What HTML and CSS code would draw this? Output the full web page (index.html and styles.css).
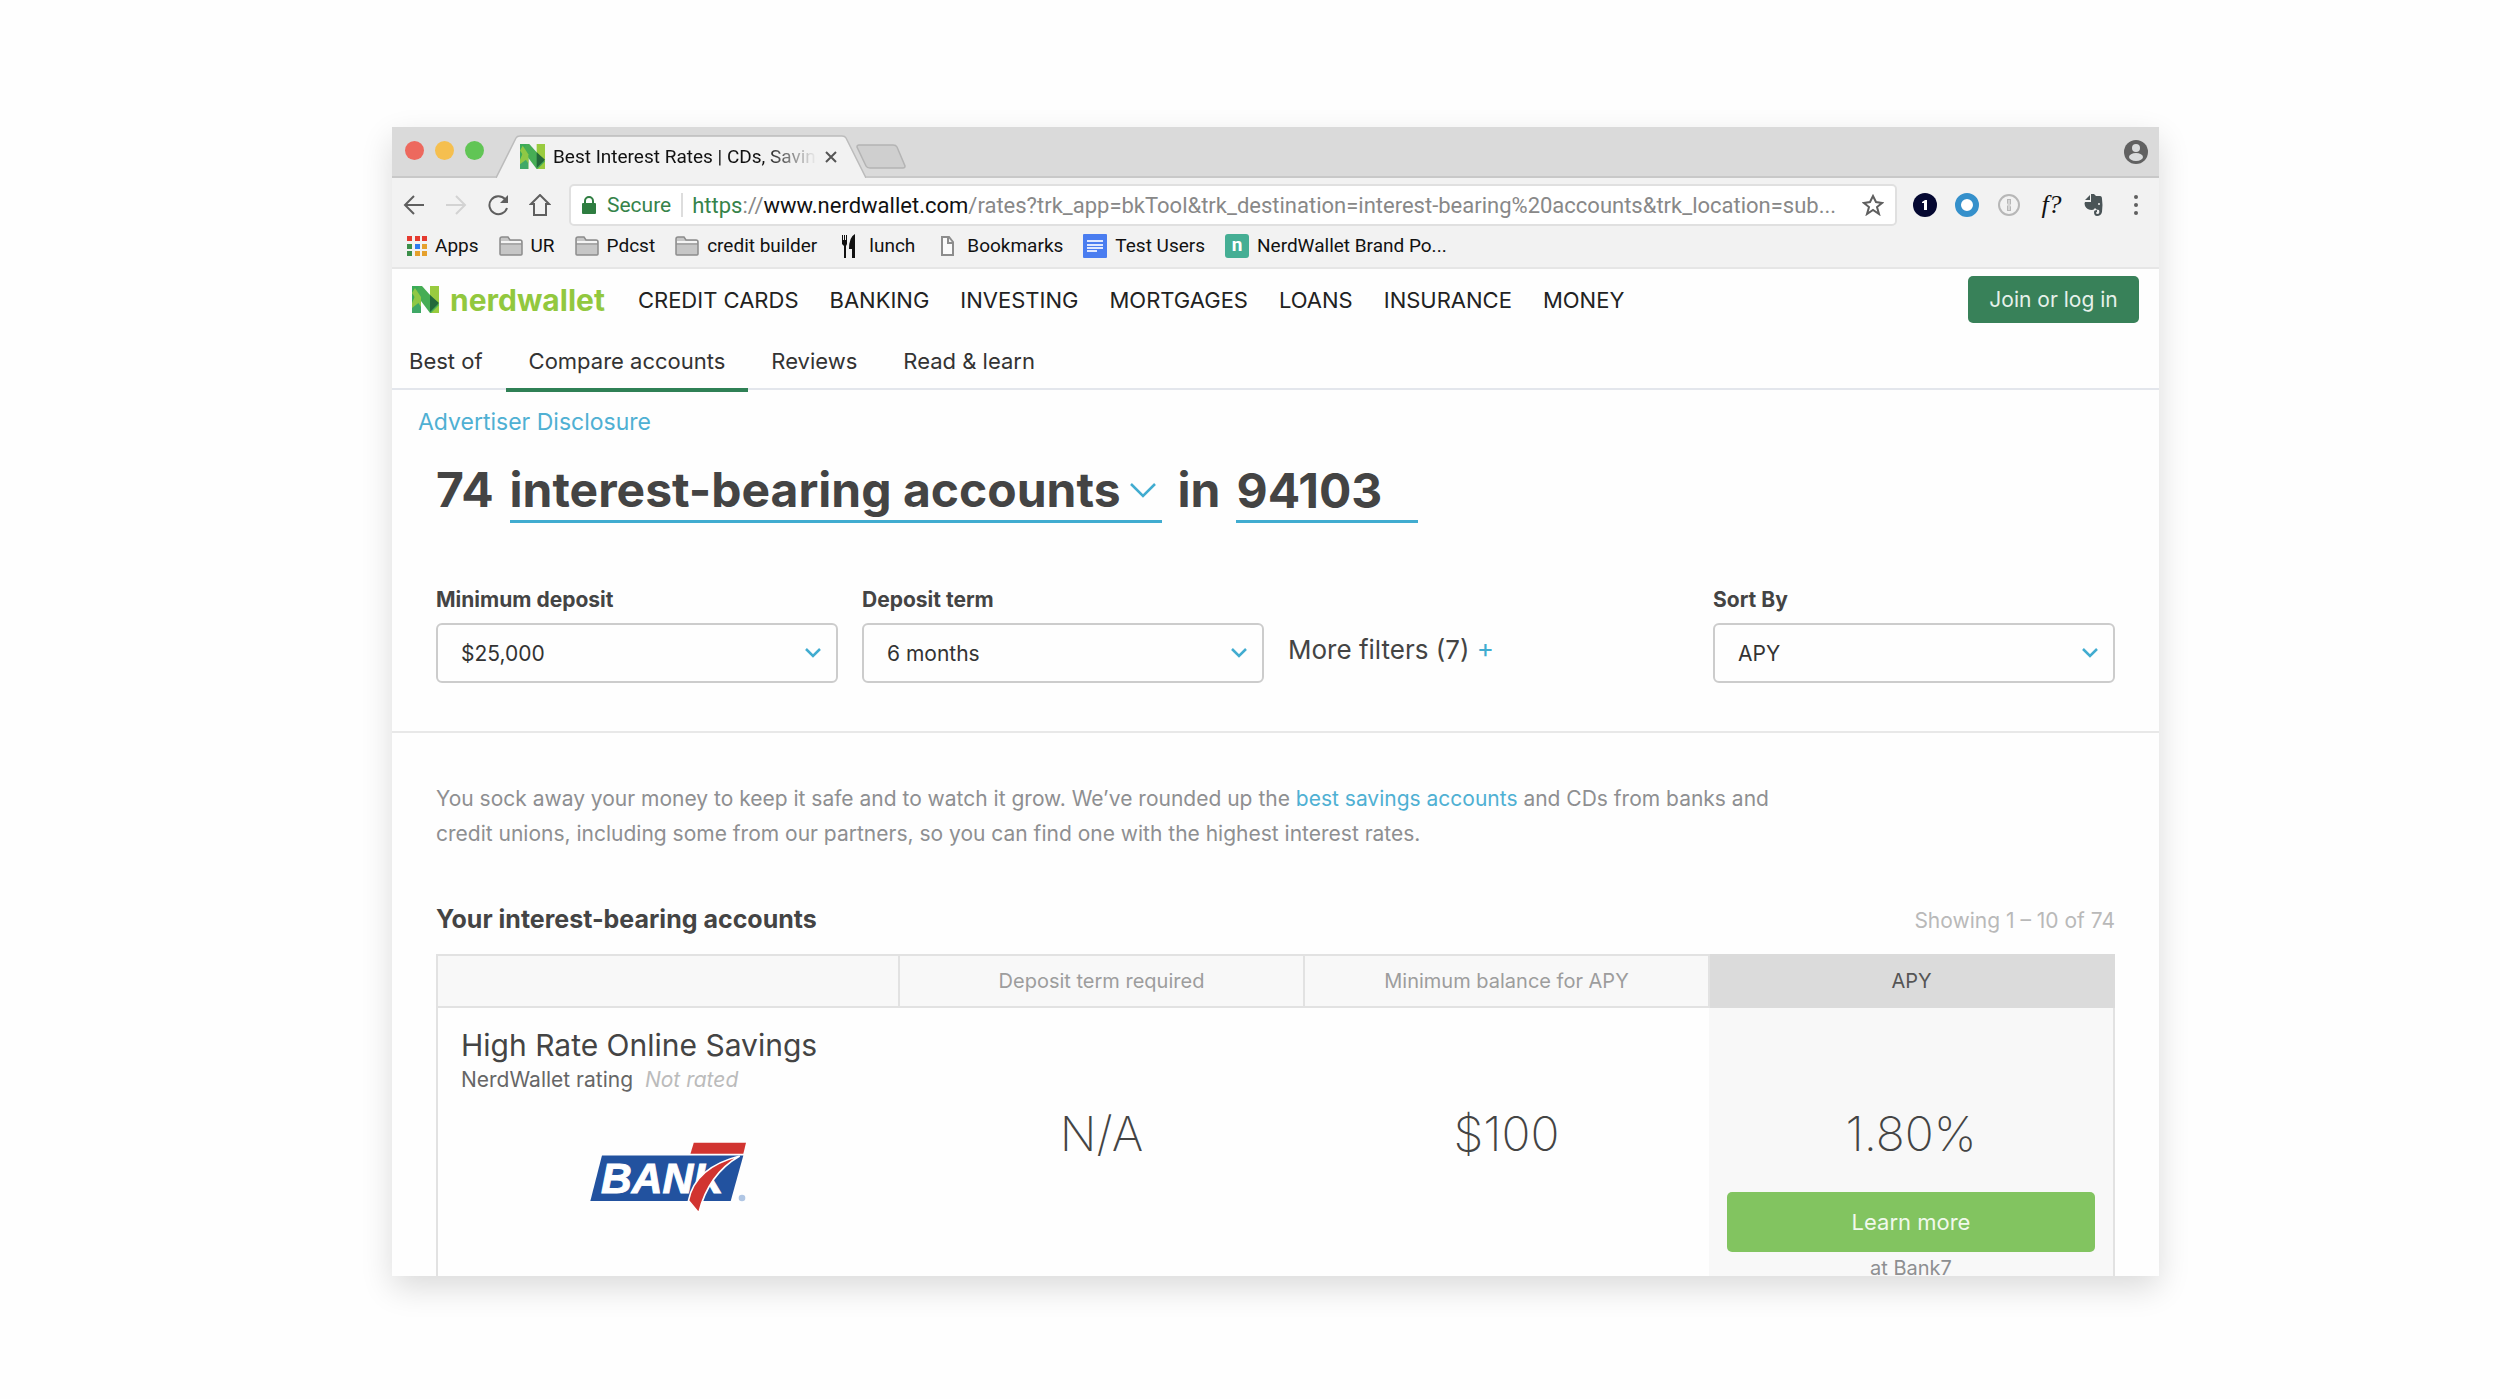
FILE: index.html
```html
<!DOCTYPE html>
<html lang="en">
<head>
    <meta charset="UTF-8">
    <meta name="viewport" content="width=device-width, initial-scale=1.0">
    <title>Best Interest Rates | CDs, Savings</title>
    <link rel="stylesheet" href="styles.css">
</head>
<body>
    <!-- shared icons -->
    <svg class="sprite" aria-hidden="true">
        <symbol id="nw-mark" viewBox="0 0 27 27">
            <path d="M0 0h9v27H0z" fill="#8fc845"/>
            <path d="M0 0h9L3 10 0 17z" fill="#3bab59"/>
            <path d="M0 27v-5l9-7v12z" fill="#3fa866"/>
            <path d="M18 0h9v27h-9z" fill="#99cb3f"/>
            <path d="M7 0h3l17 19-8 8h-1L3 7z" fill="#46ad55"/>
            <path d="M0 7l3-5 6 9v10z" fill="#8fc845"/>
            <path d="M18 9l9 8-9 9z" fill="#23683a"/>
        </symbol>
        <symbol id="folder" viewBox="0 0 24 20">
            <path d="M1 18V3q0-2 2-2h6l2 3h10q2 0 2 2v12q0 1-1 1H2q-1 0-1-1z" fill="#c6c6c6" stroke="#8c8c8c" stroke-width="1.5"/>
            <path d="M2 5h20v2H2z" fill="#f4f4f4"/>
            <path d="M1 8h22" stroke="#8c8c8c"/>
        </symbol>
        <symbol id="chevron" viewBox="0 0 16 10">
            <path d="M1 1l7 7 7-7" fill="none" stroke="#41acd0" stroke-width="2.5"/>
        </symbol>
    </svg>

    <div class="window">
        <div class="tab-strip">
            <div class="lights">
                <span class="light red"></span>
                <span class="light yellow"></span>
                <span class="light green"></span>
            </div>
            <div class="tab">
                <svg class="tab-shape" viewBox="0 0 370 43" preserveAspectRatio="none"><path d="M0 43L20 3q1-2 4-2h322q3 0 4 2l20 40" fill="#f2f2f2" stroke="#bcbcbc" stroke-width="1.5"/></svg>
                <svg class="favicon"><use href="#nw-mark"/></svg>
                <span class="tab-title">Best Interest Rates | CDs, Savings</span>
                <button class="icon-btn" aria-label="Close tab"><svg width="12" height="12" viewBox="0 0 12 12"><path d="M1 1l10 10M11 1L1 11" stroke="#555" stroke-width="2"/></svg></button>
            </div>
            <button class="icon-btn new-tab" aria-label="New tab"><svg width="50" height="26" viewBox="0 0 50 26"><path d="M3 1h34q3 0 4 2l8 19q0 2-2 2H14q-3 0-4-2L1 3q0-2 2-2z" fill="#cfcfcf" stroke="#b4b4b4" stroke-width="1.5"/></svg></button>
            <button class="icon-btn avatar" aria-label="Profile"><svg width="24" height="24" viewBox="0 0 24 24"><circle cx="12" cy="12" r="12" fill="#616161"/><circle cx="12" cy="8" r="4" fill="#dadcdd"/><ellipse cx="12" cy="17" rx="7" ry="4" fill="#dadcdd"/></svg></button>
        </div>

        <div class="toolbar">
            <div class="nav-buttons">
                <button class="icon-btn" aria-label="Back"><svg width="22" height="22" viewBox="0 0 22 22" fill="none" stroke="#5f5f5f" stroke-width="2"><path d="M21 11H2M11 2l-9 9 9 9"/></svg></button>
                <button class="icon-btn" aria-label="Forward"><svg width="22" height="22" viewBox="0 0 22 22" fill="none" stroke="#d3d3d3" stroke-width="2"><path d="M1 11h19M11 2l9 9-9 9"/></svg></button>
                <button class="icon-btn" aria-label="Reload"><svg width="22" height="22" viewBox="0 0 22 22" fill="none" stroke="#5f5f5f" stroke-width="2"><path d="M18 5a9 9 0 1 0 2 9"/><path d="M21 1v8h-8z" fill="#5f5f5f" stroke="none"/></svg></button>
                <button class="icon-btn" aria-label="Home"><svg width="22" height="22" viewBox="0 0 22 22" fill="none" stroke="#5f5f5f" stroke-width="2"><path d="M5 10H2l9-9 9 9h-3v11H5z"/></svg></button>
            </div>
            <div class="omnibox">
                <svg width="14" height="18" viewBox="0 0 14 18"><path d="M3 8V5a4 4 0 0 1 8 0v3" fill="none" stroke="#2e7d40" stroke-width="2"/><rect y="7" width="14" height="11" rx="1" fill="#2e7d40"/></svg>
                <span class="secure">Secure</span>
                <span class="url"><span class="scheme">https</span>://<span class="host">www.nerdwallet.com</span>/rates?trk_app=bkTool&amp;trk_destination=interest-bearing%20accounts&amp;trk_location=sub...</span>
                <button class="icon-btn star" aria-label="Bookmark this page"><svg width="22" height="22" viewBox="0 0 22 22"><path d="M11 2l3 6 6 1-5 4 2 7-6-4-6 4 2-7-5-4 6-1z" fill="none" stroke="#5f5f5f" stroke-width="2"/></svg></button>
            </div>
            <div class="extensions">
                <svg width="24" height="24" viewBox="0 0 24 24"><circle cx="12" cy="12" r="12" fill="#050831"/><path d="M9 9l3-2h2v10h-3v-7H9z" fill="#fff"/></svg>
                <svg width="24" height="24" viewBox="0 0 24 24"><circle cx="12" cy="12" r="9" fill="#fff" stroke="#3590cb" stroke-width="6"/></svg>
                <svg width="24" height="24" viewBox="0 0 24 24"><circle cx="12" cy="12" r="10" fill="none" stroke="#b7b7b7" stroke-width="2"/><path d="M10 6h4v5l-1 1 1 2v4h-4v-5l1-1-1-2z" fill="#b7b7b7"/><path d="M12 7v10" stroke="#f2f2f2"/></svg>
                <span class="ext-f">f?</span>
                <svg width="24" height="24" viewBox="0 0 24 24"><path d="M3 7l5-5v5zM9 1h3l2 2h4q2 0 2 3 1 6 0 13-1 4-5 4-3 0-3-4 0-2 3-2v2q-1 0-1 1 0 1 2 1 2-1 1-4-3 0-4-2-1 2-3 2-5 0-7-4-1-3 0-4h6z" fill="#4a5457"/><circle cx="17" cy="11" r="1" fill="#f2f2f2"/></svg>
                <svg width="24" height="24" viewBox="0 0 24 24" fill="#5f5f5f"><circle cx="12" cy="4" r="2"/><circle cx="12" cy="12" r="2"/><circle cx="12" cy="20" r="2"/></svg>
            </div>
        </div>

        <div class="bookmarks">
            <a href="#"><svg width="20" height="20" viewBox="0 0 20 20"><path d="M0 0h5v5H0zM8 0h5v5H8zM15 0h5v5h-5z" fill="#e53a2f"/><path d="M0 8h5v5H0zM0 15h5v5H0z" fill="#3c8f4a"/><path d="M8 8h5v5H8z" fill="#2f7bf0"/><path d="M15 8h5v5h-5zM8 15h5v5H8zM15 15h5v5h-5z" fill="#e5a02c"/></svg>Apps</a>
            <a href="#"><svg width="24" height="20"><use href="#folder"/></svg>UR</a>
            <a href="#"><svg width="24" height="20"><use href="#folder"/></svg>Pdcst</a>
            <a href="#"><svg width="24" height="20"><use href="#folder"/></svg>credit builder</a>
            <a href="#"><svg width="24" height="24" viewBox="0 0 24 24"><path d="M5 1h1v5h1V1h1v5h1V1h1v9l-1 2v12H7V12l-2-2zM18 0v24h-3v-9h-3q0-12 6-15z" fill="#111"/></svg>lunch</a>
            <a href="#"><svg width="24" height="20" viewBox="0 0 24 20"><path d="M7 1h7l4 5v13H7zM13 1v6h5" fill="#fafafa" stroke="#8c8c8c" stroke-width="2"/></svg>Bookmarks</a>
            <a href="#"><svg width="24" height="24" viewBox="0 0 24 24"><rect width="24" height="24" rx="1" fill="#4a7df0"/><path d="M4 7h16M4 11h16M4 14h16M4 17h10" stroke="#dfe8ff" stroke-width="2"/></svg>Test Users</a>
            <a href="#"><span class="n-icon">n</span>NerdWallet Brand Po...</a>
        </div>

        <header class="site-header">
            <a class="logo" href="#"><svg width="27" height="27"><use href="#nw-mark"/></svg>nerdwallet</a>
            <nav class="main-nav">
                <a href="#">CREDIT CARDS</a>
                <a href="#">BANKING</a>
                <a href="#">INVESTING</a>
                <a href="#">MORTGAGES</a>
                <a href="#">LOANS</a>
                <a href="#">INSURANCE</a>
                <a href="#">MONEY</a>
            </nav>
            <button class="join">Join or log in</button>
        </header>
        <nav class="sub-nav">
            <a href="#">Best of</a>
            <a href="#" class="active">Compare accounts</a>
            <a href="#">Reviews</a>
            <a href="#">Read &amp; learn</a>
        </nav>

        <section class="filters">
            <a class="disclosure" href="#">Advertiser Disclosure</a>
            <h1>
                <span>74</span>
                <span class="picker title-picker">
                    <select aria-label="Account type"><option>interest-bearing accounts</option></select>
                    <svg viewBox="0 0 26 16"><path d="M1 2l12 12L25 2" fill="none" stroke="#41acd0" stroke-width="2.5"/></svg>
                </span>
                <span>in</span>
                <input class="zip" type="text" value="94103" aria-label="ZIP code">
            </h1>
            <div class="filter-row">
                <div class="field">
                    <label for="deposit">Minimum deposit</label>
                    <span class="picker">
                        <select id="deposit"><option>$25,000</option></select>
                        <svg><use href="#chevron"/></svg>
                    </span>
                </div>
                <div class="field">
                    <label for="term">Deposit term</label>
                    <span class="picker">
                        <select id="term"><option>6 months</option></select>
                        <svg><use href="#chevron"/></svg>
                    </span>
                </div>
                <button class="more">More filters (7) <span>+</span></button>
                <div class="field sort">
                    <label for="sort">Sort By</label>
                    <span class="picker">
                        <select id="sort"><option>APY</option></select>
                        <svg><use href="#chevron"/></svg>
                    </span>
                </div>
            </div>
        </section>

        <main class="results">
            <p class="intro">You sock away your money to keep it safe and to watch it grow. We’ve rounded up the <a href="#">best savings accounts</a> and CDs from banks and credit unions, including some from our partners, so you can find one with the highest interest rates.</p>
            <div class="results-head">
                <h2>Your interest-bearing accounts</h2>
                <span>Showing 1 – 10 of 74</span>
            </div>
            <table>
                <thead>
                    <tr>
                        <th class="col-account"></th>
                        <th>Deposit term required</th>
                        <th>Minimum balance for APY</th>
                        <th class="sorted">APY</th>
                    </tr>
                </thead>
                <tbody>
                    <tr>
                        <td class="account">
                            <h3>High Rate Online Savings</h3>
                            <p>NerdWallet rating <em>Not rated</em></p>
                            <svg class="bank-logo" viewBox="84 64 472 216">
                                <path d="M120 104h425l-38 137H85z" fill="#22529f"/>
                                <text x="117" y="217">BANK</text>
                                <path d="M396 66h157l-8 33H386z" fill="#d13430"/>
                                <path d="M534 106Q400 140 380 240l31 37Q440 160 534 106z" fill="#d13430" stroke="#fff" stroke-width="5"/>
                                <circle cx="541" cy="232" r="10" fill="#b0c6e4"/>
                            </svg>
                        </td>
                        <td class="value">N/A</td>
                        <td class="value">$100</td>
                        <td class="value apy">1.80%
                            <button class="learn">Learn more</button>
                            <small>at Bank7</small>
                        </td>
                    </tr>
                </tbody>
            </table>
        </main>
    </div>
</body>
</html>
```
FILE: styles.css
```css
* {
    box-sizing: border-box;
}

body {
    margin: 0;
    padding: 127px 341px 123px 392px;
    height: 100vh;
    background-color: #fefefe;
    font-family: Inter, "Liberation Sans", sans-serif;
    font-size: 21px;
    color: #444;
}

a {
    color: inherit;
    text-decoration: none;
}

button, select, input {
    font: inherit;
    color: inherit;
    margin: 0;
    padding: 0;
    border: none;
    background: none;
    appearance: none;
}

h1, h2, h3, p {
    margin: 0;
}

svg {
    display: block;
    flex: none;
}

.sprite {
    position: absolute;
    width: 0;
    height: 0;
}

.window {
    height: 100%;
    overflow: hidden;
    background-color: #fefefe;
    box-shadow: 0 12px 30px rgba(0, 0, 0, 0.14);
}

/* browser chrome */
.tab-strip, .toolbar, .bookmarks {
    font-family: Roboto, "Liberation Sans", sans-serif;
    font-size: 19px;
    color: #111;
    display: flex;
    align-items: center;
}

.icon-btn {
    display: flex;
}

.tab-strip {
    height: 51px;
    padding: 0 11px 0 13px;
    background-color: #dadada;
    border-bottom: 2px solid #c8c8c8;
}

.lights {
    display: flex;
    gap: 11px;
}

.light {
    width: 19px;
    height: 19px;
    margin-bottom: 3px;
    border-radius: 50%;
}

.red {
    background-color: #ed695e;
}

.yellow {
    background-color: #f5bf4f;
}

.green {
    background-color: #61c555;
}

.tab {
    position: relative;
    align-self: flex-end;
    display: flex;
    align-items: center;
    width: 370px;
    height: 43px;
    margin: 0 0 -2px 12px;
    padding: 0 29px 0 24px;
}

.tab > * {
    position: relative;
}

.tab .tab-shape {
    position: absolute;
    top: 0;
    left: 0;
    width: 100%;
    height: 100%;
}

.favicon {
    width: 25px;
    height: 25px;
}

.tab-title {
    flex: 1;
    margin: 0 8px;
    overflow: hidden;
    white-space: nowrap;
    -webkit-mask-image: linear-gradient(to right, #000 80%, transparent);
    mask-image: linear-gradient(to right, #000 80%, transparent);
}

.new-tab {
    margin: 10px 0 0 -10px;
}

.avatar {
    margin-left: auto;
}

.toolbar {
    height: 54px;
    padding: 0 11px;
    background-color: #f2f2f2;
}

.nav-buttons {
    display: flex;
    gap: 20px;
}

.omnibox {
    flex: 1;
    display: flex;
    align-items: center;
    height: 42px;
    margin: 0 16px 0 18px;
    padding: 0 11px 0 11px;
    background-color: #fff;
    border: 2px solid #e0e0e0;
    border-radius: 5px;
    font-size: 21px;
}

.secure {
    margin-left: 11px;
    padding-right: 10px;
    border-right: 2px solid #ddd;
    color: #36834a;
}

.url {
    margin-left: 9px;
    color: #888;
    font-size: 22px;
    white-space: nowrap;
}

.scheme {
    color: #36834a;
}

.host {
    color: #111;
}

.star {
    margin-left: auto;
}

.extensions {
    display: flex;
    align-items: center;
    gap: 18px;
}

.ext-f {
    width: 25px;
    font: italic 26px/24px "Liberation Serif", serif;
    text-align: center;
}

.bookmarks {
    gap: 20px;
    height: 37px;
    padding: 0 15px 8px;
    background-color: #f2f2f2;
    border-bottom: 2px solid #e6e6e6;
}

.bookmarks a {
    display: flex;
    align-items: center;
    gap: 8px;
}

.n-icon {
    width: 24px;
    height: 24px;
    border-radius: 3px;
    background-color: #45ae94;
    color: #fff;
    font-weight: bold;
    line-height: 22px;
    text-align: center;
}

/* site header */
.site-header {
    display: flex;
    align-items: center;
    height: 61px;
    padding: 0 20px;
    color: #222;
}

.logo {
    display: flex;
    align-items: center;
    gap: 11px;
    margin-right: 33px;
    color: #92c83e;
    font-size: 30px;
    font-weight: bold;
}

.main-nav {
    display: flex;
    gap: 31px;
    font-size: 22px;
}

.join {
    width: 171px;
    height: 47px;
    margin-left: auto;
    border-radius: 5px;
    background-color: #388159;
    color: #e6f1ea;
}

.sub-nav {
    display: flex;
    height: 60px;
    padding-left: 17px;
    border-bottom: 2px solid #e3e6ec;
    color: #333;
    font-size: 22px;
}

.sub-nav a {
    height: 62px;
    padding: 18px 23px 0;
}

.sub-nav a:first-child {
    padding-left: 0;
}

.sub-nav .active {
    border-bottom: 4px solid #2f8055;
}

/* filters */
.filters {
    padding: 20px 44px 48px;
    border-bottom: 2px solid #e8e8e8;
}

.disclosure {
    display: block;
    margin-left: -18px;
    color: #4fb0d3;
    font-size: 23px;
    line-height: 24px;
}

h1 {
    display: flex;
    gap: 16px;
    margin-top: 26px;
    font-size: 48px;
    font-weight: bold;
    line-height: 60px;
}

h1 .picker, .zip {
    height: 63px;
    border-bottom: 3px solid #41acd0;
}

.picker {
    display: grid;
    align-items: center;
}

.picker select, .picker svg {
    grid-area: 1 / 1;
}

.picker svg {
    width: 16px;
    height: 10px;
    margin-right: 17px;
    justify-self: end;
    pointer-events: none;
}

.title-picker select {
    padding-right: 40px;
}

.title-picker svg {
    width: 26px;
    height: 16px;
    margin-right: 6px;
}

.zip {
    width: 182px;
}

.filter-row {
    display: flex;
    gap: 24px;
    margin-top: 63px;
}

.field {
    flex: 0 1 402px;
}

.field label {
    display: block;
    margin-bottom: 9px;
    font-weight: bold;
    line-height: 28px;
}

.field select {
    width: 100%;
    height: 60px;
    padding: 0 23px;
    border: 2px solid #ccc;
    border-radius: 6px;
    color: #333;
}

.more {
    align-self: flex-end;
    height: 68px;
    font-size: 26px;
}

.more span {
    color: #41acd0;
}

.sort {
    margin-left: auto;
}

/* results */
.results {
    padding: 48px 44px 0;
}

.intro {
    max-width: 1340px;
    line-height: 35px;
    color: #8e8f91;
}

.intro a {
    color: #4fb0d3;
}

.results-head {
    display: flex;
    justify-content: space-between;
    align-items: baseline;
    margin: 52px 0 17px;
    line-height: 32px;
    color: #b9b9b9;
}

h2 {
    font-size: 25px;
    color: #444;
}

table {
    width: 100%;
    table-layout: fixed;
    border-collapse: collapse;
    border: 2px solid #e2e2e2;
}

th {
    height: 52px;
    padding: 0;
    border: 2px solid #e2e2e2;
    background-color: #f8f8f8;
    color: #9d9d9d;
    font-size: 20px;
    font-weight: normal;
}

.col-account {
    width: 462px;
}

.sorted {
    background-color: #dbdbdb;
    border-color: #dbdbdb;
    color: #555;
}

td {
    padding: 0;
    vertical-align: top;
}

.account {
    padding: 20px 23px 80px;
}

h3 {
    font-size: 30px;
    font-weight: normal;
    line-height: 34px;
}

.account p {
    margin-top: 4px;
    line-height: 28px;
    color: #666;
}

.account em {
    margin-left: 6px;
    color: #bbb;
}

.bank-logo {
    width: 157px;
    height: 72px;
    margin: 48px auto 0;
}

.bank-logo text {
    font: italic bold 128px "Liberation Sans", sans-serif;
    fill: #fff;
    stroke: #fff;
    stroke-width: 3px;
}

.value {
    padding-top: 100px;
    font-size: 48px;
    font-weight: 200;
    line-height: 52px;
    text-align: center;
}

.apy {
    padding: 100px 18px 0;
    background-color: #f8f8f8;
}

.learn {
    display: block;
    width: 100%;
    height: 60px;
    margin-top: 32px;
    border-radius: 5px;
    background-color: #82c460;
    color: #f1f9ec;
    font-size: 22px;
    font-weight: normal;
    line-height: 60px;
}

.apy small {
    display: block;
    color: #8e8f91;
    font-size: 20px;
    font-weight: normal;
    line-height: 32px;
}
```
